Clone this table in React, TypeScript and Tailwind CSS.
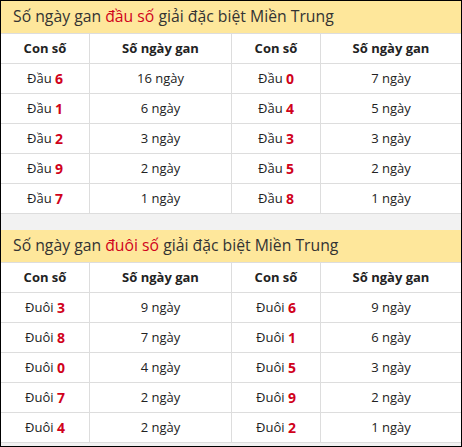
const dau = [
  ["6", "16", "0", "7"],
  ["1", "6", "4", "5"],
  ["2", "3", "3", "3"],
  ["9", "2", "5", "2"],
  ["7", "1", "8", "1"],
];

const duoi = [
  ["3", "9", "6", "9"],
  ["8", "7", "1", "6"],
  ["0", "4", "5", "3"],
  ["7", "2", "9", "2"],
  ["4", "2", "2", "1"],
];

const cell = "flex items-center justify-center border-r border-[#dddddd] last:border-r-0";

const Section = ({
  label,
  prefix,
  rows,
}: {
  label: string;
  prefix: string;
  rows: string[][];
}) => (
  <div className="bg-white">
    <div className="h-[33px] bg-[#fee79b] border-b border-[#dddddd] flex items-center pl-[12px] text-[15.75px] text-[#333333]">
      Số ngày gan&nbsp;<span className="text-[#d0021b]">{label}</span>&nbsp;giải đặc biệt Miền Trung
    </div>
    <div className="grid grid-cols-[89px_142px_89px_140px] h-[30px] border-b border-[#dddddd] text-[13px] font-bold text-[#222222]">
      <div className={cell}>Con số</div>
      <div className={cell}>Số ngày gan</div>
      <div className={cell}>Con số</div>
      <div className={cell}>Số ngày gan</div>
    </div>
    {rows.map((r, i) => (
      <div
        key={i}
        className="grid grid-cols-[89px_142px_89px_140px] h-[30px] border-b border-[#dddddd] text-[13px] text-[#222222]"
      >
        <div className={cell}>
          {prefix}&nbsp;<b className="text-[#d0021b] text-[14px]">{r[0]}</b>
        </div>
        <div className={cell}>{r[1]} ngày</div>
        <div className={cell}>
          {prefix}&nbsp;<b className="text-[#d0021b] text-[14px]">{r[2]}</b>
        </div>
        <div className={cell}>{r[3]} ngày</div>
      </div>
    ))}
  </div>
);

export default function App() {
  return (
    <div
      className="w-[462px] h-[447px] border border-black bg-[#f2f2f2] overflow-hidden"
      style={{ fontFamily: '"Open Sans", "Noto Sans", sans-serif' }}
    >
      <Section label="đầu số" prefix="Đầu" rows={dau} />
      <div className="h-[16px]" />
      <Section label="đuôi số" prefix="Đuôi" rows={duoi} />
    </div>
  );
}
